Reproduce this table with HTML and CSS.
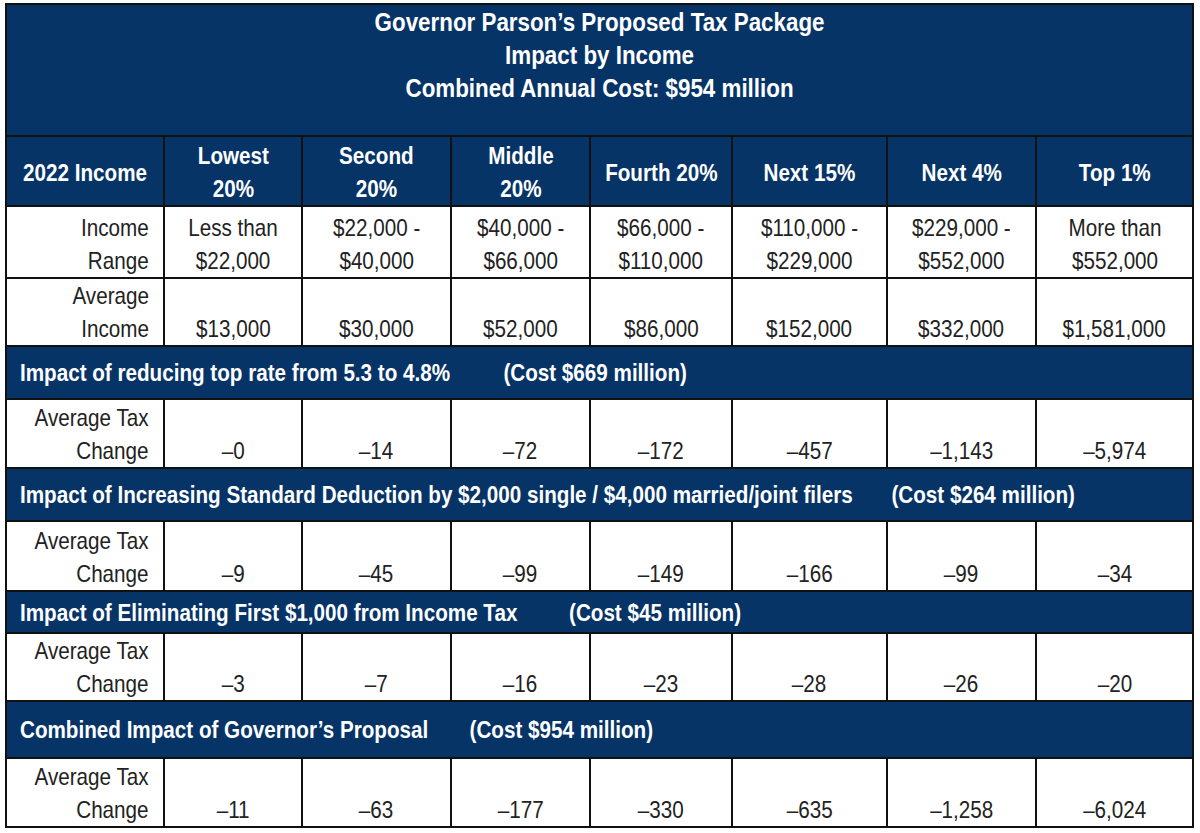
FILE: index.html
```html
<!DOCTYPE html>
<html>
<head>
<meta charset="utf-8">
<link rel="stylesheet" href="styles.css">
</head>
<body>
<table class="tax">
  <colgroup>
    <col class="c0"><col class="c1"><col class="c2"><col class="c3"><col class="c4"><col class="c5"><col class="c6"><col class="c7">
  </colgroup>
  <tr class="title-row">
    <td colspan="8" class="title"><span class="n">Governor Parson’s Proposed Tax Package<br>Impact by Income<br>Combined Annual Cost: $954 million</span></td>
  </tr>
  <tr class="head-row">
    <th><span class="n">2022 Income</span></th>
    <th><span class="n">Lowest<br>20%</span></th>
    <th><span class="n">Second<br>20%</span></th>
    <th><span class="n">Middle<br>20%</span></th>
    <th><span class="n">Fourth 20%</span></th>
    <th><span class="n">Next 15%</span></th>
    <th><span class="n">Next 4%</span></th>
    <th><span class="n">Top 1%</span></th>
  </tr>
  <tr class="data-row range-row">
    <td class="label"><span class="n">Income<br>Range</span></td>
    <td><span class="n">Less than<br>$22,000</span></td>
    <td><span class="n">$22,000 -<br>$40,000</span></td>
    <td><span class="n">$40,000 -<br>$66,000</span></td>
    <td><span class="n">$66,000 -<br>$110,000</span></td>
    <td><span class="n">$110,000 -<br>$229,000</span></td>
    <td><span class="n">$229,000 -<br>$552,000</span></td>
    <td><span class="n">More than<br>$552,000</span></td>
  </tr>
  <tr class="data-row avg-row">
    <td class="label"><span class="n">Average<br>Income</span></td>
    <td><span class="n">$13,000</span></td>
    <td><span class="n">$30,000</span></td>
    <td><span class="n">$52,000</span></td>
    <td><span class="n">$86,000</span></td>
    <td><span class="n">$152,000</span></td>
    <td><span class="n">$332,000</span></td>
    <td><span class="n">$1,581,000</span></td>
  </tr>
  <tr class="section s1">
    <td colspan="8"><span class="n">Impact of reducing top rate from 5.3 to 4.8%<span class="gap-62">(Cost $669 million)</span></span></td>
  </tr>
  <tr class="data-row r1">
    <td class="label"><span class="n">Average Tax<br>Change</span></td>
    <td><span class="n">–0</span></td>
    <td><span class="n">–14</span></td>
    <td><span class="n">–72</span></td>
    <td><span class="n">–172</span></td>
    <td><span class="n">–457</span></td>
    <td><span class="n">–1,143</span></td>
    <td><span class="n">–5,974</span></td>
  </tr>
  <tr class="section s2">
    <td colspan="8"><span class="n">Impact of Increasing Standard Deduction by $2,000 single / $4,000 married/joint filers<span class="gap-45">(Cost $264 million)</span></span></td>
  </tr>
  <tr class="data-row r2">
    <td class="label"><span class="n">Average Tax<br>Change</span></td>
    <td><span class="n">–9</span></td>
    <td><span class="n">–45</span></td>
    <td><span class="n">–99</span></td>
    <td><span class="n">–149</span></td>
    <td><span class="n">–166</span></td>
    <td><span class="n">–99</span></td>
    <td><span class="n">–34</span></td>
  </tr>
  <tr class="section s3">
    <td colspan="8"><span class="n">Impact of Eliminating First $1,000 from Income Tax<span class="gap-60">(Cost $45 million)</span></span></td>
  </tr>
  <tr class="data-row r3">
    <td class="label"><span class="n">Average Tax<br>Change</span></td>
    <td><span class="n">–3</span></td>
    <td><span class="n">–7</span></td>
    <td><span class="n">–16</span></td>
    <td><span class="n">–23</span></td>
    <td><span class="n">–28</span></td>
    <td><span class="n">–26</span></td>
    <td><span class="n">–20</span></td>
  </tr>
  <tr class="section s4">
    <td colspan="8"><span class="n">Combined Impact of Governor’s Proposal<span class="gap-48">(Cost $954 million)</span></span></td>
  </tr>
  <tr class="data-row r4">
    <td class="label"><span class="n">Average Tax<br>Change</span></td>
    <td><span class="n">–11</span></td>
    <td><span class="n">–63</span></td>
    <td><span class="n">–177</span></td>
    <td><span class="n">–330</span></td>
    <td><span class="n">–635</span></td>
    <td><span class="n">–1,258</span></td>
    <td><span class="n">–6,024</span></td>
  </tr>
</table>
</body>
</html>
```

FILE: styles.css
```css
html, body {
  margin: 0;
  padding: 0;
  background: #ffffff;
}

body {
  padding: 3px 0 0 5px;
  font-family: "Liberation Sans", Arial, sans-serif;
}

.tax {
  border-collapse: collapse;
  table-layout: fixed;
  width: 1187px;
  font-size: 24px;
  line-height: 33px;
  color: #222222;
  border: 2px solid #111111;
}

.c0 { width: 158px; }
.c1 { width: 138px; }
.c2 { width: 149px; }
.c3 { width: 139px; }
.c4 { width: 142px; }
.c5 { width: 155px; }
.c6 { width: 149px; }
.c7 { width: 157px; }

.tax td,
.tax th {
  border: 2px solid #111111;
  padding: 0;
  text-align: center;
}

/* The source uses a narrow face (Arial Narrow); emulate it by condensing each text run. */
.n {
  display: inline-block;
  white-space: nowrap;
  transform: scaleX(0.86);
  transform-origin: center top;
}

.title-row .title {
  height: 132px;
  background: #063467;
  color: #ffffff;
  font-weight: bold;
  font-size: 26px;
  vertical-align: top;
  padding-top: 1px;
  box-sizing: border-box;
}

.head-row th {
  height: 66px;
  background: #063467;
  color: #ffffff;
  font-weight: bold;
  vertical-align: middle;
  padding-top: 2px;
  box-sizing: border-box;
}

.data-row td {
  vertical-align: bottom;
}

.range-row td { height: 70px; }
.avg-row td { height: 66px; }
.r1 td { height: 67px; }
.r2 td { height: 68px; }
.r3 td { height: 66px; }
.r4 td { height: 67px; }

.tax .label {
  text-align: right;
  padding-right: 14px;
}

.label .n {
  transform-origin: right top;
}

.section td {
  background: #063467;
  color: #ffffff;
  font-weight: bold;
  text-align: left;
  padding-left: 13px;
  vertical-align: middle;
}

.section .n {
  transform-origin: left top;
}

.s1 td { height: 51px; }
.s2 td { height: 51px; }
.s3 td { height: 40px; }
.s4 td { height: 55px; }

.gap-62 { margin-left: 62px; }
.gap-45 { margin-left: 45px; }
.gap-60 { margin-left: 60px; }
.gap-48 { margin-left: 48px; }
```
